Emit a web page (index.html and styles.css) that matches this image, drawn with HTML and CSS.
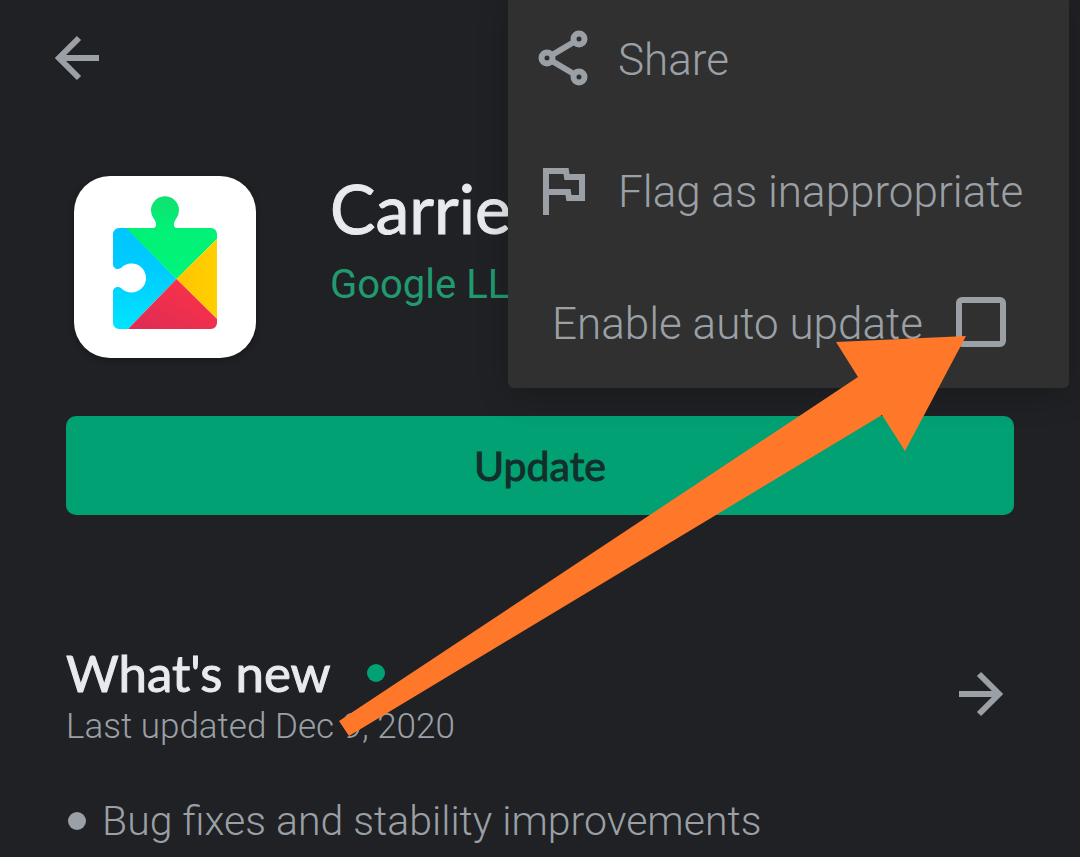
FILE: index.html
```
<!DOCTYPE html>
<html lang="en">
<head>
	<meta charset="utf-8">
	<meta name="viewport" content="width=device-width, initial-scale=1">
	<title>App details</title>
	<link rel="stylesheet" href="styles.css">
</head>
<body>
<div id="page">
	<header class="topbar">
		<button type="button" class="icon-btn" aria-label="Back">
			<svg width="46" height="46" viewBox="0 0 46 46"><path d="M45 23H5M25 3L5 23l20 20"/></svg>
		</button>
	</header>

	<section class="app">
		<div class="app-icon">
			<svg width="182" height="182" viewBox="0 0 182 182">
				<defs>
					<linearGradient id="blue" x1="0" y1="0" x2="0" y2="1"><stop offset="0" stop-color="#00c3ff"/><stop offset=".5" stop-color="#00ccff"/><stop offset="1" stop-color="#00e5ff"/></linearGradient>
					<linearGradient id="green" x1="0" y1="0" x2="0" y2="1"><stop offset="0" stop-color="#12e070"/><stop offset=".4" stop-color="#02f076"/><stop offset="1" stop-color="#00f57a"/></linearGradient>
					<linearGradient id="yellow" x1="0" y1="0" x2="1" y2="0"><stop offset="0" stop-color="#ffc400"/><stop offset="1" stop-color="#ffd000"/></linearGradient>
					<linearGradient id="red" x1="0" y1="1" x2="1" y2="0"><stop offset="0" stop-color="#dc2c55"/><stop offset="1" stop-color="#ff3347"/></linearGradient>
					<clipPath id="piece">
						<path d="M45 52h34c4 0 4-5 1-9a14 14 0 1 1 22 0c-3 4-3 9 1 9h34a6 6 0 0 1 6 6v89a6 6 0 0 1-6 6H45a6 6 0 0 1-6-6v-31c0-5 5-6 8-4a14.500 14.500 0 1 0 0-20c-3 2-8 1-8-4V58a6 6 0 0 1 6-6z"/>
					</clipPath>
				</defs>
				<g clip-path="url(#piece)">
					<path fill="url(#blue)" d="M38 36l64.500 67L51 156H38z"/>
					<path fill="url(#green)" d="M52 52V18h92v44l-41.500 41z"/>
					<path fill="url(#yellow)" d="M144 62v82l-41.500-41z"/>
					<path fill="url(#red)" d="M102.500 103L144 144v10H53z"/>
				</g>
			</svg>
		</div>
		<div class="app-text">
			<h1>Carrie</h1>
			<a href="#" class="dev">Google LL</a>
		</div>
	</section>

	<button type="button" class="update">Update</button>

	<section class="news">
		<div class="news-head">
			<div>
				<h2>What's new <i class="dot"></i></h2>
				<p class="date">Last updated Dec 9, 2020</p>
			</div>
			<button type="button" class="icon-btn" aria-label="More">
				<svg width="46" height="46" viewBox="0 0 46 46"><path d="M1 23h40M21 3l20 20-20 20"/></svg>
			</button>
		</div>
		<ul>
			<li>Bug fixes and stability improvements</li>
		</ul>
	</section>

	<div class="menu">
		<button type="button" class="item">
			<svg width="50" height="56" viewBox="0 0 50 56"><path d="M41 9L9 28l32 19"/><g fill="#303030"><circle cx="41" cy="9" r="5.500"/><circle cx="9" cy="28" r="5.500"/><circle cx="41" cy="47" r="5.500"/></g></svg>
			<span>Share</span>
		</button>
		<button type="button" class="item">
			<svg width="50" height="56" viewBox="0 0 50 56"><path d="M8 53V9h20l1 6h15v21H31l-1-6H8"/></svg>
			<span>Flag as inappropriate</span>
		</button>
		<label class="item check">
			<span>Enable auto update</span>
			<input type="checkbox">
		</label>
	</div>

	<svg class="pointer" width="628" height="401" viewBox="0 0 628 401">
		<path d="M627 0L497 6l22 35L0 385l10 15L543 79l23 36z"/>
	</svg>
</div>
</body>
</html>
```
FILE: styles.css
```
body,h1,h2,p,ul,li{
	margin:0;
	padding:0;
}
body{
	background:#202124;
	color:#9aa0a6;
	font-family:Roboto, sans-serif;
	font-weight:300;
}
button{
	border:0;
	padding:0;
	background:none;
	font:inherit;
	color:inherit;
	cursor:pointer;
}
svg{
	display:block;
}
li{
	list-style:none;
}
#page{
	position:relative;
	overflow:hidden;
	min-height:100vh;
	box-sizing:border-box;
	padding:0 66px;
}
.icon-btn svg,.item svg{
	fill:none;
	stroke:#9aa0a6;
	stroke-width:6;
}
.topbar{
	height:176px;
	padding-top:35px;
	margin-left:-12px;
	box-sizing:border-box;
}
.app{
	display:flex;
	gap:74px;
	padding-left:8px;
}
.app-icon{
	flex:none;
	width:182px;
	height:182px;
	border-radius:36px;
	background:#fff;
	box-shadow:0 2px 6px rgba(0,0,0,0.3);
}
/* Lato has no medium weight, the stroke thickens the regular one */
h1,h2,.update{
	font-family:Lato, sans-serif;
	font-weight:400;
	-webkit-text-stroke:1px currentColor;
}
h1{
	font-size:68px;
	line-height:64px;
	color:#e8eaed;
}
.dev{
	display:block;
	font-size:40px;
	line-height:48px;
	margin-top:21px;
	font-weight:400;
	color:#219a70;
	text-decoration:none;
}
.update{
	display:block;
	width:100%;
	height:99px;
	margin-top:58px;
	border-radius:10px;
	background:#01a173;
	color:#132f2b;
	font-size:41px;
}
.news{
	padding-top:128px;
}
.news-head{
	display:flex;
	justify-content:space-between;
	align-items:center;
	padding-right:10px;
}
.news-head .icon-btn{
	padding-bottom:6px;
}
h2{
	display:flex;
	align-items:center;
	gap:36px;
	font-size:51px;
	line-height:60px;
	color:#e8eaed;
}
.dot{
	width:18px;
	height:18px;
	border-radius:50%;
	background:#01a173;
}
.date{
	font-size:35px;
	line-height:48px;
}
.news li{
	display:flex;
	align-items:center;
	gap:16px;
	margin-top:46px;
	padding-left:2px;
	font-size:41px;
	line-height:48px;
}
.news li::before{
	content:"";
	width:18px;
	height:18px;
	border-radius:50%;
	background:#9aa0a6;
}
.menu{
	position:absolute;
	top:-8px;
	right:11px;
	width:561px;
	border-radius:6px;
	background:#303030;
	box-shadow:0 8px 32px rgba(0,0,0,0.2);
}
.item{
	display:flex;
	align-items:center;
	gap:30px;
	width:100%;
	height:132px;
	padding-left:30px;
	box-sizing:border-box;
	font-size:44px;
	text-align:left;
	white-space:nowrap;
}
.item span{
	padding-top:4px;
}
.check{
	justify-content:space-between;
	padding:0 63px 0 44px;
}
.check input{
	appearance:none;
	flex:none;
	width:50px;
	height:50px;
	margin:0;
	border:6px solid #9aa0a6;
	border-radius:6px;
}
/* drawn over the menu, its tip on the tick box */
.pointer{
	position:absolute;
	top:336px;
	right:113px;
	fill:#ff7729;
	pointer-events:none;
}
```
